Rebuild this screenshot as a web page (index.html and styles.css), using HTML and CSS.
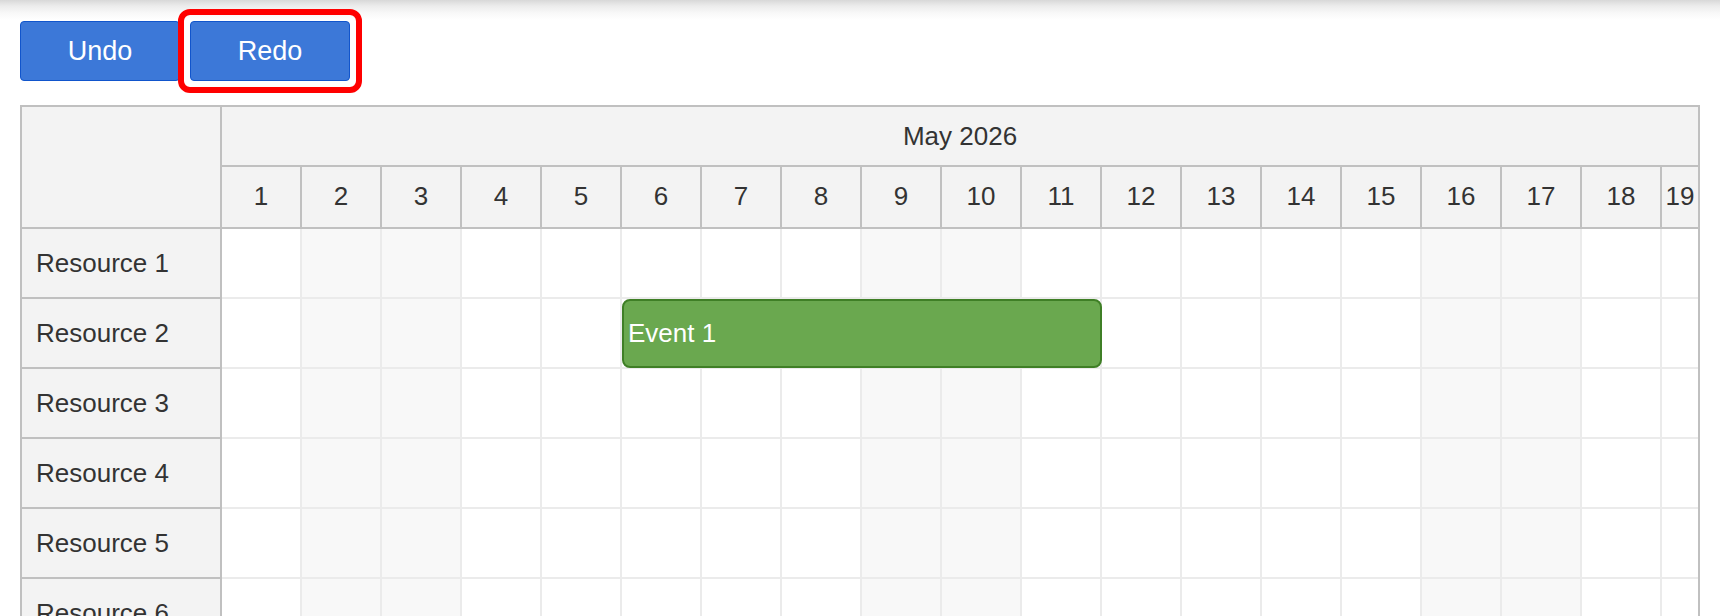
FILE: index.html
```html
<!DOCTYPE html>
<html lang="en">
<head>
<meta charset="utf-8">
<title>Scheduler Undo/Redo</title>
<link rel="stylesheet" href="styles.css">
</head>
<body>
<div class="shade"></div>
<div class="toolbar">
  <button class="btn">Undo</button>
  <button class="btn highlighted">Redo</button>
</div>
<div class="scheduler">
  <div class="rescol">
    <div class="corner"></div>
    <div class="res">Resource 1</div>
    <div class="res">Resource 2</div>
    <div class="res">Resource 3</div>
    <div class="res">Resource 4</div>
    <div class="res">Resource 5</div>
    <div class="res">Resource 6</div>
    <div class="res">Resource 7</div>
  </div>
  <div class="main">
    <div class="month">May 2026</div>
    <div class="days">
      <div class="d">1</div><div class="d">2</div><div class="d">3</div><div class="d">4</div><div class="d">5</div><div class="d">6</div><div class="d">7</div><div class="d">8</div><div class="d">9</div><div class="d">10</div><div class="d">11</div><div class="d">12</div><div class="d">13</div><div class="d">14</div><div class="d">15</div><div class="d">16</div><div class="d">17</div><div class="d">18</div><div class="d">19</div>
    </div>
    <div class="row">
      <div class="c"></div><div class="c we"></div><div class="c we"></div><div class="c"></div><div class="c"></div><div class="c"></div><div class="c"></div><div class="c"></div><div class="c we"></div><div class="c we"></div><div class="c"></div><div class="c"></div><div class="c"></div><div class="c"></div><div class="c"></div><div class="c we"></div><div class="c we"></div><div class="c"></div><div class="c"></div>
    </div>
    <div class="row">
      <div class="c"></div><div class="c we"></div><div class="c we"></div><div class="c"></div><div class="c"></div><div class="c"></div><div class="c"></div><div class="c"></div><div class="c we"></div><div class="c we"></div><div class="c"></div><div class="c"></div><div class="c"></div><div class="c"></div><div class="c"></div><div class="c we"></div><div class="c we"></div><div class="c"></div><div class="c"></div>
      <div class="event">Event 1</div>
    </div>
    <div class="row">
      <div class="c"></div><div class="c we"></div><div class="c we"></div><div class="c"></div><div class="c"></div><div class="c"></div><div class="c"></div><div class="c"></div><div class="c we"></div><div class="c we"></div><div class="c"></div><div class="c"></div><div class="c"></div><div class="c"></div><div class="c"></div><div class="c we"></div><div class="c we"></div><div class="c"></div><div class="c"></div>
    </div>
    <div class="row">
      <div class="c"></div><div class="c we"></div><div class="c we"></div><div class="c"></div><div class="c"></div><div class="c"></div><div class="c"></div><div class="c"></div><div class="c we"></div><div class="c we"></div><div class="c"></div><div class="c"></div><div class="c"></div><div class="c"></div><div class="c"></div><div class="c we"></div><div class="c we"></div><div class="c"></div><div class="c"></div>
    </div>
    <div class="row">
      <div class="c"></div><div class="c we"></div><div class="c we"></div><div class="c"></div><div class="c"></div><div class="c"></div><div class="c"></div><div class="c"></div><div class="c we"></div><div class="c we"></div><div class="c"></div><div class="c"></div><div class="c"></div><div class="c"></div><div class="c"></div><div class="c we"></div><div class="c we"></div><div class="c"></div><div class="c"></div>
    </div>
    <div class="row">
      <div class="c"></div><div class="c we"></div><div class="c we"></div><div class="c"></div><div class="c"></div><div class="c"></div><div class="c"></div><div class="c"></div><div class="c we"></div><div class="c we"></div><div class="c"></div><div class="c"></div><div class="c"></div><div class="c"></div><div class="c"></div><div class="c we"></div><div class="c we"></div><div class="c"></div><div class="c"></div>
    </div>
    <div class="row">
      <div class="c"></div><div class="c we"></div><div class="c we"></div><div class="c"></div><div class="c"></div><div class="c"></div><div class="c"></div><div class="c"></div><div class="c we"></div><div class="c we"></div><div class="c"></div><div class="c"></div><div class="c"></div><div class="c"></div><div class="c"></div><div class="c we"></div><div class="c we"></div><div class="c"></div><div class="c"></div>
    </div>
  </div>
</div>
</body>
</html>
```

FILE: styles.css
```css
html, body {
  margin: 0;
  padding: 0;
  overflow: hidden;
  background: #fff;
}

body {
  font-family: "Liberation Sans", Arial, sans-serif;
  color: #333;
}

.shade {
  height: 20px;
  background: linear-gradient(to bottom, #d8d8d8 0%, #ececec 30%, #f8f8f8 65%, #ffffff 100%);
}

.toolbar {
  display: flex;
  gap: 10px;
  padding: 1px 0 0 20px;
}

.btn {
  position: relative;
  box-sizing: border-box;
  width: 160px;
  height: 60px;
  background: #3c78d8;
  color: #fff;
  border: 1px solid #1155cc;
  border-radius: 4px;
  font-family: "Liberation Sans", Arial, sans-serif;
  font-size: 27px;
  padding: 0;
}

.highlighted::after {
  content: "";
  position: absolute;
  top: -13px;
  left: -13px;
  right: -13px;
  bottom: -13px;
  border: 6px solid #ff0000;
  border-radius: 12px;
}

.scheduler {
  display: flex;
  box-sizing: border-box;
  width: 1680px;
  margin: 24px 0 0 20px;
  border: 2px solid #c0c0c0;
  font-size: 26px;
}

.rescol {
  flex: none;
  width: 200px;
  box-sizing: border-box;
  border-right: 2px solid #c0c0c0;
  background: #f3f3f3;
}

.corner {
  height: 122px;
  box-sizing: border-box;
  border-bottom: 2px solid #c0c0c0;
}

.res {
  height: 70px;
  box-sizing: border-box;
  border-bottom: 2px solid #c0c0c0;
  display: flex;
  align-items: center;
  padding-left: 14px;
}

.main {
  flex: 1;
  min-width: 0;
  overflow: hidden;
}

.month {
  height: 60px;
  box-sizing: border-box;
  border-bottom: 2px solid #c0c0c0;
  background: #f3f3f3;
  display: flex;
  align-items: center;
  justify-content: center;
}

.days {
  display: flex;
  height: 62px;
  box-sizing: border-box;
  border-bottom: 2px solid #c0c0c0;
  background: #f3f3f3;
}

.d {
  flex: none;
  width: 80px;
  box-sizing: border-box;
  border-right: 2px solid #c0c0c0;
  display: flex;
  align-items: center;
  justify-content: center;
  padding-bottom: 1px;
}

.d:last-child {
  flex: 1 1 auto;
  min-width: 0;
  border-right: 0;
}

.row {
  position: relative;
  display: flex;
  height: 70px;
}

.c {
  flex: none;
  width: 80px;
  box-sizing: border-box;
  border-right: 2px solid #ebebeb;
  border-bottom: 2px solid #ebebeb;
  background: #fff;
}

.c:nth-child(19) {
  flex: 1 1 auto;
  min-width: 0;
  border-right: 0;
}

.c.we {
  background: #f8f8f8;
}

.event {
  position: absolute;
  top: 0;
  left: 400px;
  width: 480px;
  height: 69px;
  box-sizing: border-box;
  background: #6aa84f;
  border: 2px solid #3f7f26;
  border-radius: 8px;
  color: #fff;
  display: flex;
  align-items: center;
  padding-left: 4px;
}
```
